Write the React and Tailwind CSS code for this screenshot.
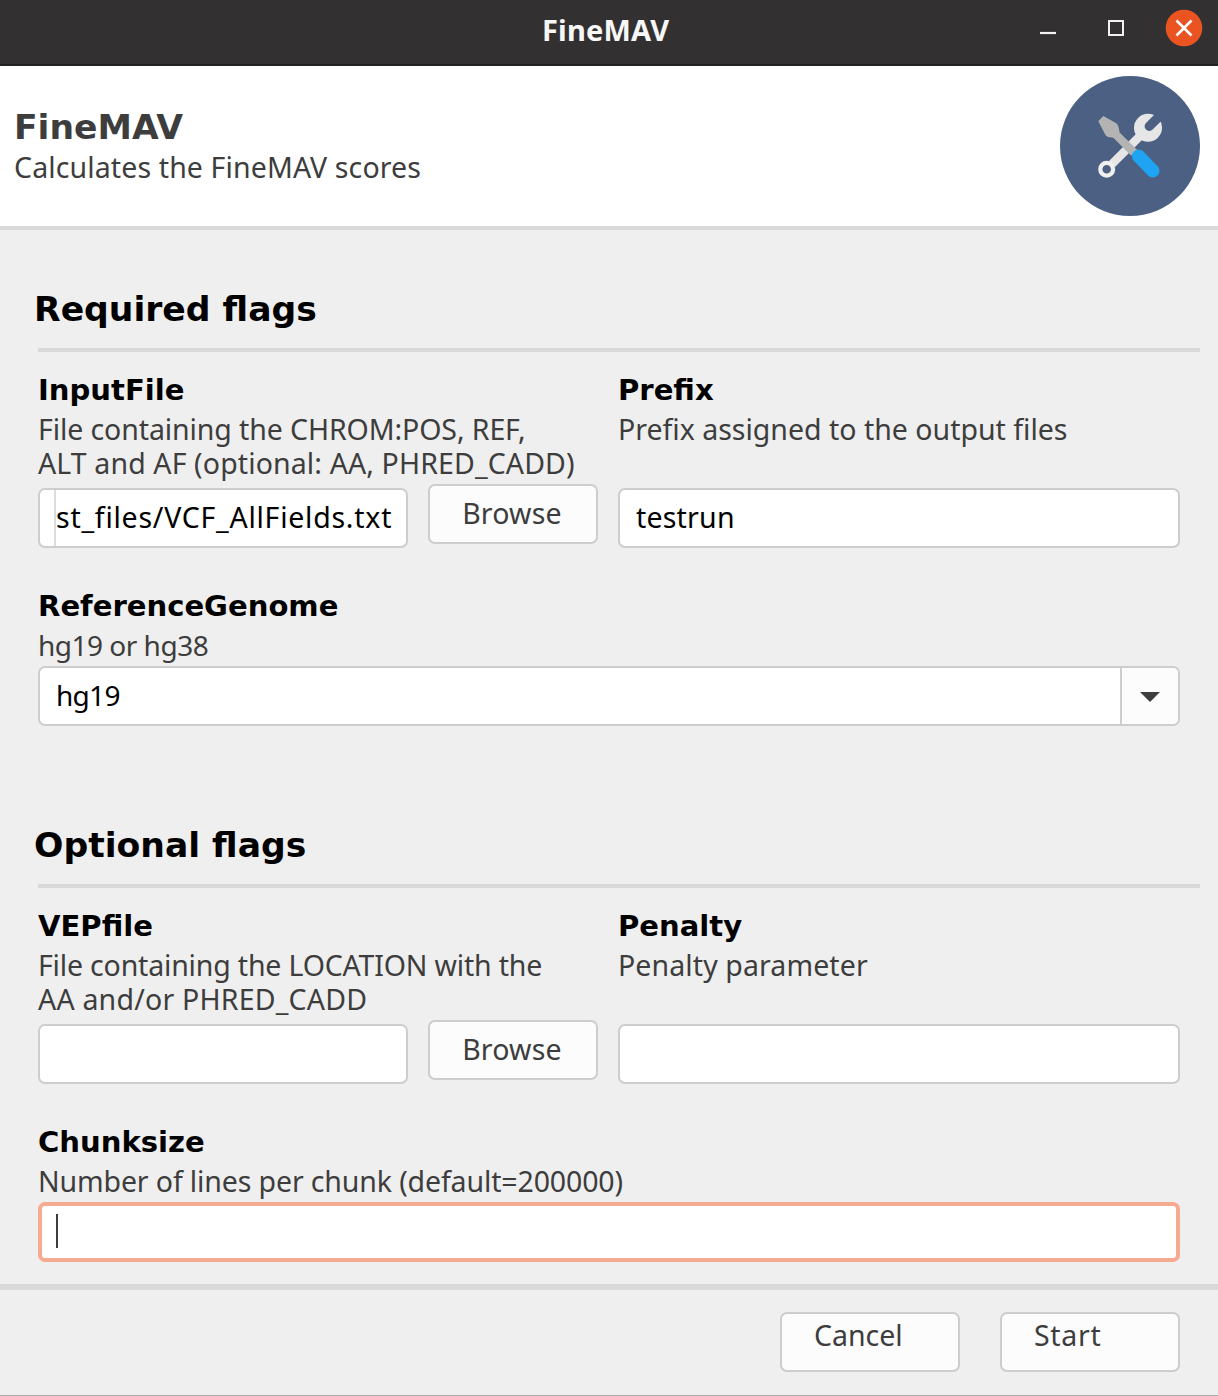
function TitleBar() {
  return (
    <header className="flex h-[66px] shrink-0 border-b-2 border-[#232122] bg-[#333031] text-white">
      <h1 className="flex-1 pl-[542px] font-['Noto_Sans',sans-serif] text-[29px] leading-[59px] font-bold tracking-[0.2px] text-[#f7f7f7]">
        FineMAV
      </h1>
      <div className="flex w-[178px] items-start pt-[9px]">
        <svg className="mr-[20px] h-[38px] w-[28px]" viewBox="0 0 28 38" fill="none">
          <path d="M0 24H16" stroke="#f2f2f2" strokeWidth="2.2" />
        </svg>
        <svg className="mr-[29px] ml-[20px] h-[38px] w-[28px]" viewBox="0 0 28 38" fill="none">
          <rect x="1" y="12" width="14" height="14" stroke="#f2f2f2" strokeWidth="2" />
        </svg>
        <svg className="h-[38px] w-[38px] shrink-0" viewBox="0 0 38 38" fill="none">
          <circle cx="19" cy="19" r="18.3" fill="#e95420" />
          <path d="M11.5 11.5L26.5 26.5M26.5 11.5L11.5 26.5" stroke="#fff" strokeWidth="2.6" />
        </svg>
      </div>
    </header>
  );
}

function ToolsLogo() {
  return (
    <svg className="h-[140px] w-[140px]" viewBox="0 0 140 140" fill="none">
      <circle cx="70" cy="70" r="70" fill="#4c6083" />
      <path d="M52 88L82 58" stroke="#e6e6e6" strokeWidth="8.4" />
      <circle cx="88" cy="51.8" r="14" fill="#e6e6e6" />
      <path d="M89.3 50.3L104 35.6" stroke="#4c6083" strokeWidth="9.4" strokeLinecap="round" />
      <circle cx="46.7" cy="93.3" r="6.4" fill="#4c6083" stroke="#f0f0f0" strokeWidth="4.2" />
      <path
        d="M43.3 40L56.3 47.3Q58 48.5 58.8 52L59.6 56.5L77.5 74.3L71 79.5L53.3 61.8L48 61Q46 60.5 45.2 58.6L38.3 45.3Z"
        fill="#b3b3b3"
      />
      <path d="M78.6 80.2L92.8 94.8" stroke="#1ea4f2" strokeWidth="13.4" strokeLinecap="round" />
    </svg>
  );
}

function Banner() {
  return (
    <section className="flex h-[164px] shrink-0 justify-between border-b-4 border-[#d9d9d9] bg-white pt-[10px] pr-[18px] pl-[14px] text-[#3d3d3d]">
      <div className="pt-[31px]">
        <h2 className="font-['DejaVu_Sans',sans-serif] text-[34.6px] leading-[40px] font-bold">FineMAV</h2>
        <p className="pt-px text-[28.5px] leading-[39px] tracking-[0.12px]">Calculates the FineMAV scores</p>
      </div>
      <ToolsLogo />
    </section>
  );
}

function Label({ children }) {
  return (
    <h4 className="h-[40px] origin-left scale-x-[1.038] pt-px font-['DejaVu_Sans',sans-serif] text-[28px] leading-[40px] font-bold text-black">
      {children}
    </h4>
  );
}

function SectionTitle({ children }) {
  return (
    <h3 className="h-[64px] w-[1162px] border-b-4 border-[#d9d9d9] pt-px font-['DejaVu_Sans',sans-serif] text-[34.6px] leading-[40px] font-bold text-black">
      <span className="-ml-[4px]">{children}</span>
    </h3>
  );
}

const box = "h-[60px] rounded-[7px] border-2 border-[#cdcdcd] bg-white text-black";

function Browse() {
  return (
    <button className="-mt-[4px] ml-[20px] h-[60px] w-[170px] rounded-[7px] border-2 border-[#cdcdcd] bg-[#fcfcfc] pr-[2px] pb-[2px] text-[28.5px] leading-[54px] tracking-[0.2px] text-[#3d3d3d]">
      Browse
    </button>
  );
}

export default function App() {
  return (
    <div className="flex h-[1396px] w-[1218px] flex-col overflow-hidden border-b border-[#a8a8a8] bg-[#efefef] font-['Noto_Sans',sans-serif] text-[28.5px] text-[#3d3d3d]">
      <TitleBar />
      <Banner />
      <main className="h-[1054px] shrink-0 pt-[58px] pl-[38px]">
        <SectionTitle>Required flags</SectionTitle>
        <div className="flex gap-[20px] pt-[18px]">
          <div className="w-[560px]">
            <Label>InputFile</Label>
            <div className="h-[78px] pt-[2px] leading-[34px] whitespace-nowrap">
              <p className="tracking-[-0.1px]">File containing the CHROM:POS, REF,</p>
              <p className="tracking-[0.12px]">ALT and AF (optional: AA, PHRED_CADD)</p>
            </div>
            <div className="flex">
              <div className={`${box} flex w-[370px] pr-[16px] pl-[14px]`}>
                <div className="flex flex-1 justify-end border-l-2 border-[#dcdcdc] leading-[55px] tracking-[0.75px] whitespace-nowrap">
                  st_files/VCF_AllFields.txt
                </div>
              </div>
              <Browse />
            </div>
          </div>
          <div className="w-[562px]">
            <Label>Prefix</Label>
            <p className="h-[78px] pt-[2px] leading-[34px]">Prefix assigned to the output files</p>
            <div className={`${box} pl-[16px] leading-[55px] tracking-[0.2px]`}>testrun</div>
          </div>
        </div>
        <div className="w-[1142px] pt-[38px]">
          <Label>ReferenceGenome</Label>
          <p className="h-[40px] pt-[2px] text-[28px] leading-[34px] tracking-[-0.5px]">hg19 or hg38</p>
          <div className={`${box} flex overflow-hidden`}>
            <div className="flex-1 pl-[16px] text-[28px] leading-[54px] tracking-[-0.7px]">hg19</div>
            <div className="flex w-[58px] items-center justify-center border-l-2 border-[#cdcdcd] bg-[#fcfcfc] pt-[2px]">
              <svg className="h-[10px] w-[20px]" viewBox="0 0 20 10">
                <path d="M0 0H20L10 10Z" fill="#3d3d3d" />
              </svg>
            </div>
          </div>
        </div>
        <div className="pt-[98px]">
          <SectionTitle>Optional flags</SectionTitle>
        </div>
        <div className="flex gap-[20px] pt-[18px]">
          <div className="w-[560px]">
            <Label>VEPfile</Label>
            <div className="h-[78px] pt-[2px] leading-[34px] whitespace-nowrap">
              <p className="tracking-[-0.18px]">File containing the LOCATION with the</p>
              <p className="tracking-[0.2px]">AA and/or PHRED_CADD</p>
            </div>
            <div className="flex">
              <div className={`${box} w-[370px]`} />
              <Browse />
            </div>
          </div>
          <div className="w-[562px]">
            <Label>Penalty</Label>
            <p className="h-[78px] pt-[2px] leading-[34px] tracking-[0.1px]">Penalty parameter</p>
            <div className={box} />
          </div>
        </div>
        <div className="w-[1142px] pt-[38px]">
          <Label>Chunksize</Label>
          <p className="h-[40px] pt-[2px] leading-[34px] tracking-[-0.13px]">Number of lines per chunk (default=200000)</p>
          <div className="flex h-[60px] rounded-[7px] border-4 border-[#f6aa90] bg-white pt-[8px] pl-[14px]">
            <div className="h-[34px] w-[2px] bg-[#3d3d3d]" />
          </div>
        </div>
      </main>
      <footer className="flex flex-1 justify-end gap-[40px] border-t-[6px] border-[#d9d9d9] pt-[22px] pr-[38px]">
        <button className="flex h-[60px] w-[180px] rounded-[7px] border-2 border-[#cdcdcd] bg-[#fcfcfc] pl-[32px] leading-[43px]">
          Cancel
        </button>
        <button className="flex h-[60px] w-[180px] rounded-[7px] border-2 border-[#cdcdcd] bg-[#fcfcfc] pl-[32px] leading-[43px] tracking-[0.7px]">
          Start
        </button>
      </footer>
    </div>
  );
}
